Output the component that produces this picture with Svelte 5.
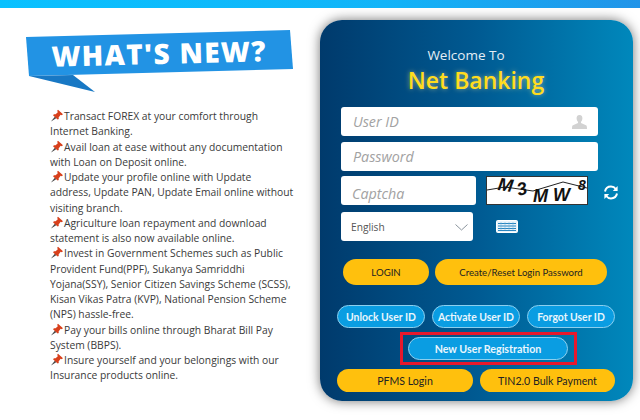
<script>
  const news = [
    'Transact FOREX at your comfort through Internet Banking.',
    'Avail loan at ease without any documentation with Loan on Deposit online.',
    'Update your profile online with Update\naddress, Update PAN, Update Email online without\nvisiting branch.',
    'Agriculture loan repayment and download statement is also now available online.',
    'Invest in Government Schemes such as Public Provident Fund(PPF), Sukanya Samriddhi Yojana(SSY), Senior Citizen Savings Scheme (SCSS), Kisan Vikas Patra (KVP), National Pension Scheme (NPS) hassle-free.',
    'Pay your bills online through Bharat Bill Pay System (BBPS).',
    'Insure yourself and your belongings with our Insurance products online.'
  ];
  const captcha = ['M', '3', 'M', 'W', '8'];
</script>

<div class="topbar"></div>
<main>
  <section class="news">
    <svg class="banner" width="270" height="64" viewBox="0 0 270 64" aria-label="What's new?">
      <polygon points="1,7 265,0 268,39 4,46" fill="#2293e4" />
      <polygon points="4,46 48,45 70,62" fill="#1878c4" />
      <text x="134" y="34" text-anchor="middle" transform="rotate(-1.5 134 24)">WHAT'S NEW?</text>
    </svg>
    <div class="items">
      {#each news as item}
        <p><svg class="pin" width="14" height="13" viewBox="0 0 14 13" aria-hidden="true"><path d="M1 12.500 5 7.500 6.500 9Z" fill="#444" /><path d="M8 .8 13 5.200 11.600 6.200 10.600 5.800 8.600 8.400 8.800 10 7.600 10.600 3 6.200 4 5.200 5.600 5.200 7.800 3.200 7.200 1.800Z" fill="#d8401c" /></svg>{item}</p>
      {/each}
    </div>
  </section>

  <section class="card">
    <h2>Welcome To</h2>
    <h1>Net Banking</h1>

    <div class="field wide first">
      <span>User ID</span>
      <svg class="user" width="15" height="14" viewBox="0 0 15 14" aria-hidden="true">
        <path d="M7.500 0C5.400 0 4.400 1.600 4.600 3.600 4.700 5 5.300 6.200 6 6.800V8L1 10.200C.3 10.600 0 11.200 0 14H15C15 11.200 14.700 10.600 14 10.200L9 8V6.800C9.700 6.200 10.300 5 10.400 3.600 10.600 1.600 9.600 0 7.500 0Z" fill="#d2d2d2" />
      </svg>
    </div>
    <div class="field wide"><span>Password</span></div>

    <div class="row captcha-row">
      <div class="field short"><span>Captcha</span></div>
      <div class="captcha">
        <svg width="100" height="27" viewBox="0 0 100 27" aria-hidden="true">
          <path d="M0 13 18 10 46 14 76 5 100 11" fill="none" stroke="#222" stroke-width="1" />
        </svg>
        {#each captcha as ch}<b>{ch}</b>{/each}
      </div>
      <svg class="refresh" width="16" height="15" viewBox="0 0 16 15" aria-hidden="true">
        <path d="M2 6.500C2.600 3.500 5 1.600 8 1.600 10 1.600 11.700 2.500 12.800 4" fill="none" stroke="#fff" stroke-width="2" />
        <path d="M14.600 1V6H9.800Z" fill="#fff" />
        <path d="M14 8.500C13.400 11.500 11 13.400 8 13.400 6 13.400 4.300 12.500 3.200 11" fill="none" stroke="#fff" stroke-width="2" />
        <path d="M1.400 14V9H6.200Z" fill="#fff" />
      </svg>
    </div>

    <div class="row lang-row">
      <div class="select">
        <span>English</span>
        <svg width="13" height="7" viewBox="0 0 13 7" aria-hidden="true"><path d="M.5.5 6.500 6 12.500.5" fill="none" stroke="#8a949c" stroke-width="1" /></svg>
      </div>
      <svg class="keyboard" width="22" height="13" viewBox="0 0 22 13" aria-hidden="true">
        <rect x=".5" y=".5" width="21" height="12" rx="1" fill="#e8f4fb" stroke="#fff" />
        <path d="M2 3.500H20M2 6H20M2 8.500H20M2 10.500H20" stroke="#2a86c0" stroke-width="1" />
        <path d="M5 2V10M9 2V10M13 2V10M17 2V10" stroke="#6fb0d8" stroke-width=".5" />
      </svg>
    </div>

    <div class="row login-row">
      <button class="gold login">LOGIN</button>
      <button class="gold reset">Create/Reset Login Password</button>
    </div>

    <div class="row links">
      <button class="sky">Unlock User ID</button>
      <button class="sky">Activate User ID</button>
      <button class="sky">Forgot User ID</button>
    </div>

    <div class="highlight"><button class="sky">New User Registration</button></div>

    <div class="row bottom">
      <button class="gold">PFMS Login</button>
      <button class="gold">TIN2.0 Bulk Payment</button>
    </div>
  </section>
</main>

<style>
  :global(body) { margin: 0; background: #fff; font-family: "Open Sans", "Liberation Sans", sans-serif; }
  .topbar { height: 8px; background: linear-gradient(90deg, #09c1ff, #12b4f8 60%, #2294e8); }
  main { display: flex; width: 640px; height: 412px; overflow: hidden; }

  .news { width: 320px; padding: 22px 0 0 25px; box-sizing: border-box; }
  .banner { display: block; }
  .banner text { font-family: "Open Sans", sans-serif; font-size: 28px; font-weight: 800; letter-spacing: 1.300px; fill: #fff; }
  .items { margin: 15px 0 0 25px; width: 248px; color: #3a3a3a; font-size: 10.300px; line-height: 15.250px; }
  .items p { margin: 0; white-space: pre-line; }
  .pin { vertical-align: -2px; }

  .card { width: 313px; height: 381px; margin-top: 12px; padding: 26px 18px 0 17px; box-sizing: border-box; border-radius: 22px; background: linear-gradient(90deg, #003a6c, #005a92 50%, #0088bc); box-shadow: 0 0 12px rgba(0, 0, 0, .55); }
  h2 { margin: 0; padding-right: 20px; text-align: center; color: #e4eef6; font-size: 13.500px; font-weight: 400; line-height: 18px; }
  h1 { margin: 0; text-align: center; color: #ffdc1e; font-size: 23px; font-weight: 600; line-height: 33px; text-shadow: 0 0 5px rgba(255, 240, 150, .55); }

  .field { display: flex; align-items: center; justify-content: space-between; height: 29px; box-sizing: border-box; padding: 0 12px; background: #fff; border-radius: 3px; color: #a2a2a2; font-size: 14.300px; font-style: italic; }
  .wide { width: 257px; margin: 6px 0 0 4px; }
  .first { margin-top: 10px; }
  .short { flex: none; width: 135px; padding: 5px 11px 0; }
  .user { margin-right: -1px; }

  .row { display: flex; align-items: center; }
  .captcha-row { margin: 5px 0 0 4px; }
  .captcha { flex: none; position: relative; display: flex; align-items: flex-start; width: 102px; height: 29px; margin-left: 10px; padding-left: 11px; box-sizing: border-box; background: #fff; border: 1px solid #333; font-family: "Liberation Sans", sans-serif; font-size: 18px; font-style: italic; line-height: 16px; color: #111; }
  .captcha svg { position: absolute; left: 0; top: 0; }
  .captcha b { position: relative; }
  .captcha b:nth-of-type(1) { margin-top: 0; transform: rotate(8deg); }
  .captcha b:nth-of-type(2) { margin: 4px 0 0 4px; transform: rotate(-14deg); }
  .captcha b:nth-of-type(3) { margin: 11px 0 0 6px; }
  .captcha b:nth-of-type(4) { margin: 10px 0 0 5px; }
  .captcha b:nth-of-type(5) { margin: 0 0 0 8px; font-size: 14px; }
  .refresh { flex: none; margin: 4px 0 0 15px; }

  .lang-row { margin: 7px 0 0 4px; }
  .select { display: flex; align-items: center; justify-content: space-between; width: 132px; height: 29px; box-sizing: border-box; padding: 1px 5px 0 10px; background: #fff; border-radius: 3px; color: #555; font-size: 10.200px; }
  .keyboard { margin-left: 23px; }

  button { display: block; padding: 0; border: 0; border-radius: 14px; font-family: Lato, "Open Sans", sans-serif; }
  .gold { background: #ffc00d; color: #222; }
  .sky { background: #0a9de2; border: 1px solid #8ccfee; color: #e8f6fd; font-size: 10.400px; font-weight: 700; }

  .login-row { margin: 18px 0 0 6px; gap: 6px; }
  .login-row button { height: 26px; font-size: 9.600px; }
  .login { width: 86px; }
  .reset { width: 172px; }

  .links { margin-top: 20px; justify-content: space-between; width: 278px; }
  .links button { width: 88px; height: 23px; }

  .highlight { width: 177px; height: 33px; margin: 4px 0 0 63px; padding: 2px 0 0 5px; box-sizing: border-box; border: 3px solid #e8182c; }
  .highlight button { width: 160px; height: 23px; font-size: 10.700px; }

  .bottom { margin-top: 4px; justify-content: space-between; width: 278px; }
  .bottom button { height: 23px; font-size: 10.600px; }
  .bottom button:first-child { width: 136px; }
  .bottom button:last-child { width: 135px; }
</style>
